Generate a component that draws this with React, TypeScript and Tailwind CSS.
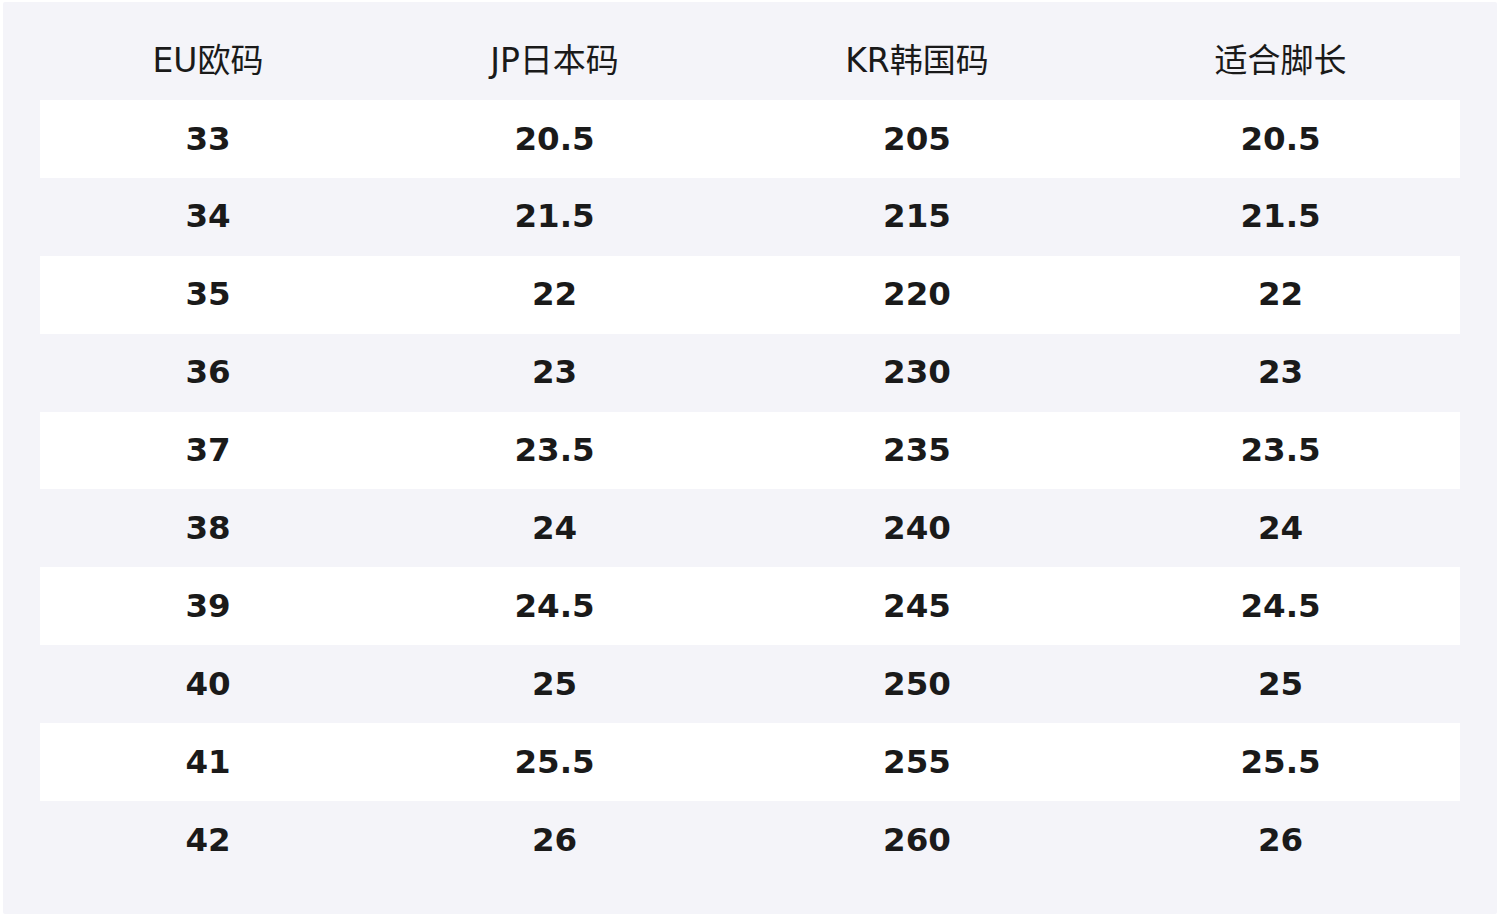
const headers = ["EU欧码", "JP日本码", "KR韩国码", "适合脚长"];

const rows = [
  ["33", "20.5", "205", "20.5"],
  ["34", "21.5", "215", "21.5"],
  ["35", "22", "220", "22"],
  ["36", "23", "230", "23"],
  ["37", "23.5", "235", "23.5"],
  ["38", "24", "240", "24"],
  ["39", "24.5", "245", "24.5"],
  ["40", "25", "250", "25"],
  ["41", "25.5", "255", "25.5"],
  ["42", "26", "260", "26"],
];

const cols = "grid grid-cols-[336px_357px_368px_359px]";

export default function App() {
  return (
    <div
      className="h-[918px] w-[1500px] bg-white p-[3px] pt-[2px] text-[#1a1a1a]"
      style={{ fontFamily: '"DejaVu Sans", "Noto Sans CJK SC", sans-serif' }}
    >
      <div className="h-[912px] rounded-[2px] bg-[#f4f4f9] px-[37px] pt-[20px]">
        <div className={`${cols} h-[78px] items-center text-center text-[33px]`}>
          {headers.map((h) => (
            <div key={h}>{h}</div>
          ))}
        </div>
        {rows.map((row, i) => (
          <div
            key={row[0]}
            className={`${cols} h-[77.9px] items-center text-center text-[32.5px] font-bold ${
              i % 2 === 0 ? "bg-white" : ""
            }`}
          >
            {row.map((cell, j) => (
              <div key={j}>{cell}</div>
            ))}
          </div>
        ))}
      </div>
    </div>
  );
}
